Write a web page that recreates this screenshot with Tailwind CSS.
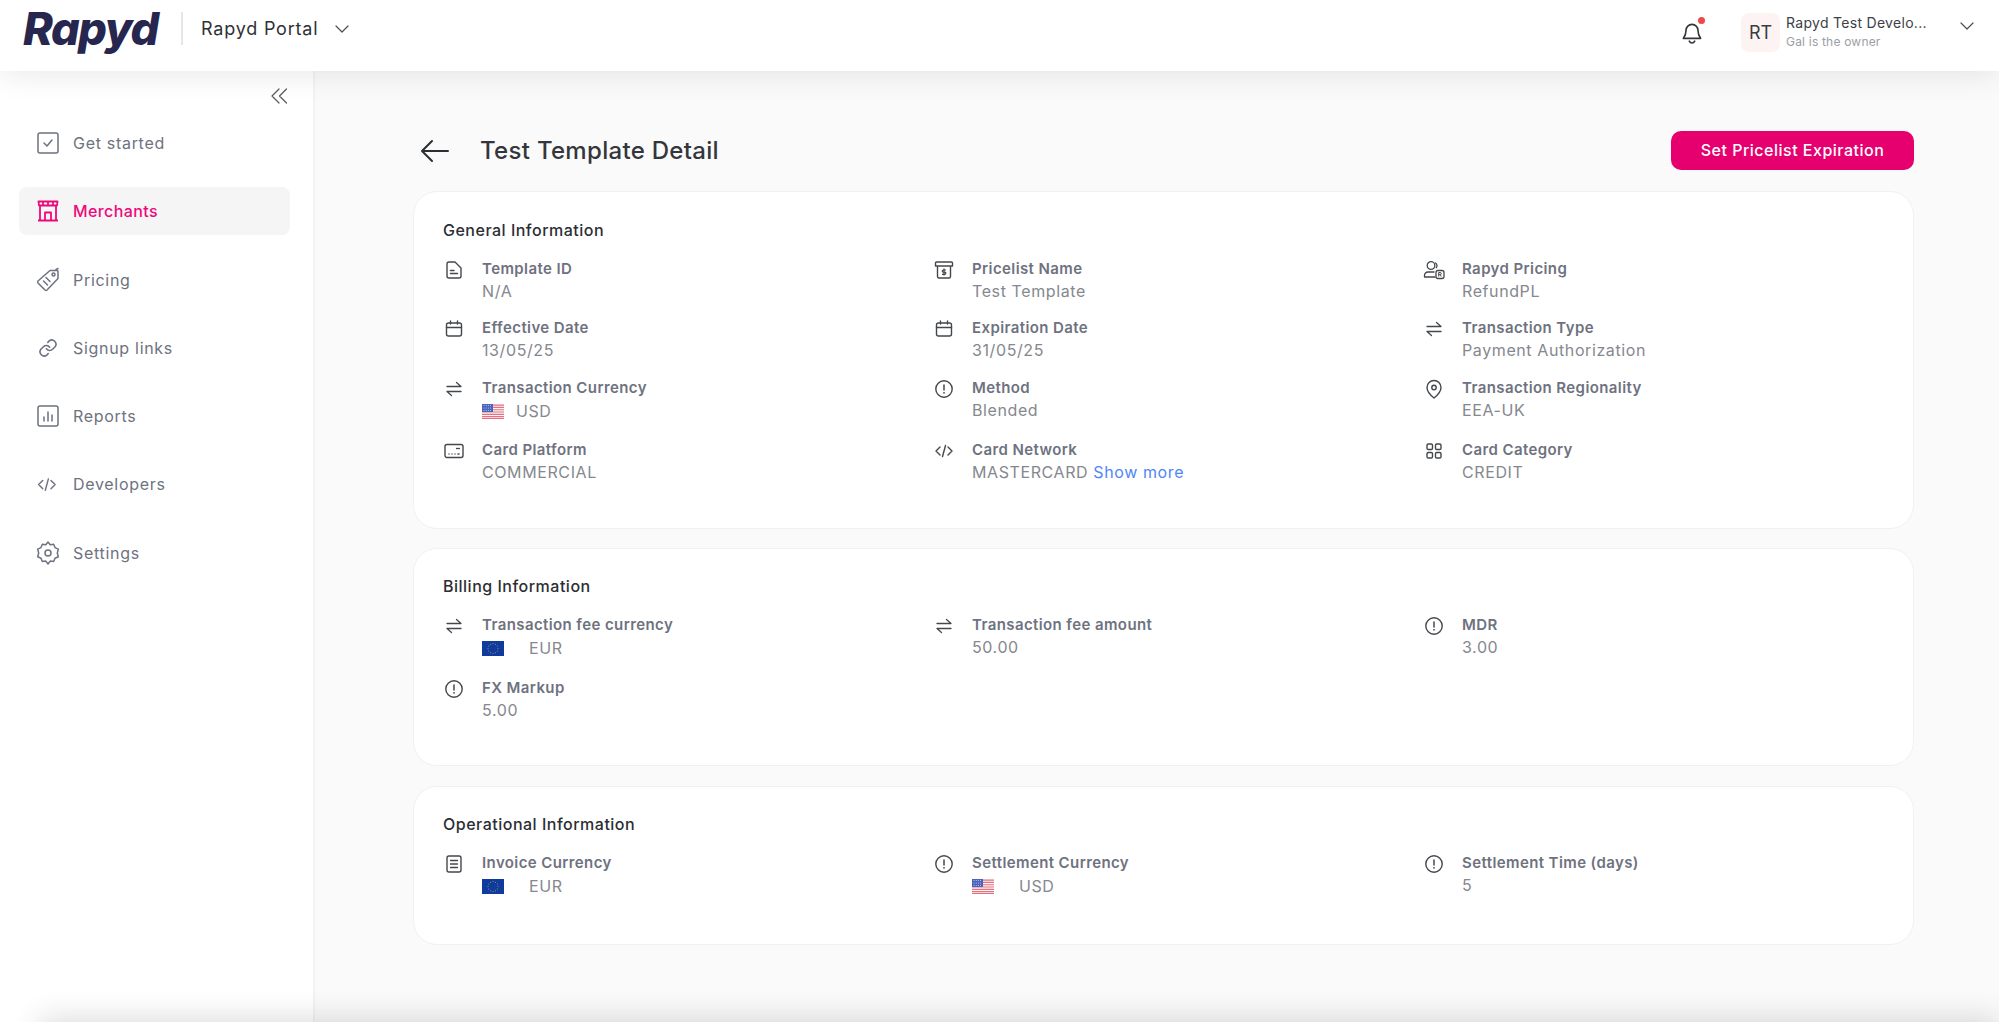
<!DOCTYPE html>
<html lang="en">
<head>
<meta charset="utf-8">
<title>Test Template Detail</title>
<script src="https://cdn.jsdelivr.net/npm/@tailwindcss/browser@4"></script>
</head>
<body class="font-['Inter',sans-serif] bg-[#fafafa] overflow-hidden">
<svg class="hidden" xmlns="http://www.w3.org/2000/svg">
  <symbol id="swap" viewBox="0 0 20 20"><path d="M3 7.500h14L12.500 3.500M17 12.500H3l4.500 4" fill="none" stroke="currentColor" stroke-width="1.300" stroke-linecap="round" stroke-linejoin="round"/></symbol>
  <symbol id="info" viewBox="0 0 20 20"><circle cx="10" cy="10" r="8.200" fill="none" stroke="currentColor" stroke-width="1.400"/><path d="M10 6v5" stroke="currentColor" stroke-width="1.500" stroke-linecap="round"/><circle cx="10" cy="13.800" r=".9" fill="currentColor"/></symbol>
  <symbol id="cal" viewBox="0 0 20 20"><rect x="2.500" y="4" width="15" height="13" rx="2" fill="none" stroke="currentColor" stroke-width="1.400"/><path d="M2.500 8.500h15M6.500 2v3M13.500 2v3" stroke="currentColor" stroke-width="1.400" stroke-linecap="round"/></symbol>
  <symbol id="code" viewBox="0 0 20 20"><path d="M6 6 2 10l4 4M14 6l4 4-4 4M11.500 4.500l-3 11" fill="none" stroke="currentColor" stroke-width="1.400" stroke-linecap="round" stroke-linejoin="round"/></symbol>
  <symbol id="doc" viewBox="0 0 20 20"><path d="M3 4a2 2 0 0 1 2-2h6l6 6v8a2 2 0 0 1-2 2H5a2 2 0 0 1-2-2z" fill="none" stroke="currentColor" stroke-width="1.400" stroke-linejoin="round"/><path d="M6.500 10.500h3.500M6.500 13.500h7" stroke="currentColor" stroke-width="1.400" stroke-linecap="round"/></symbol>
  <symbol id="list" viewBox="0 0 20 20"><rect x="3" y="2" width="14" height="16" rx="2" fill="none" stroke="currentColor" stroke-width="1.400"/><path d="M6.500 6.500h7M6.500 10h7M6.500 13.500h7" stroke="currentColor" stroke-width="1.300" stroke-linecap="round"/></symbol>
  <symbol id="box" viewBox="0 0 20 20"><path d="M1.500 6V3a1 1 0 0 1 1-1h15a1 1 0 0 1 1 1v3zM3.500 6v10.500A1.500 1.500 0 0 0 5 18h10a1.500 1.500 0 0 0 1.500-1.500V6" fill="none" stroke="currentColor" stroke-width="1.400" stroke-linejoin="round"/><path d="M10 8.500v7M12 10H9.300a1.100 1.100 0 0 0 0 2.200h1.400a1.100 1.100 0 0 1 0 2.200H8" fill="none" stroke="currentColor" stroke-width="1.200"/></symbol>
  <symbol id="user" viewBox="0 0 22 20"><circle cx="8" cy="5.500" r="3.800" fill="none" stroke="currentColor" stroke-width="1.300"/><path d="M12.500 3c1.500.8 2 3 .8 4.700M1.500 17v-1.500A3.500 3.500 0 0 1 5 12h6M1.500 17H12" fill="none" stroke="currentColor" stroke-width="1.300" stroke-linecap="round"/><rect x="13" y="10.500" width="8" height="8" rx="2" fill="none" stroke="currentColor" stroke-width="1.300"/><path d="M15.700 16.500v-4h1.500a1.100 1.100 0 0 1 0 2.200h-1.500M17.300 14.700l1 1.800" fill="none" stroke="currentColor" stroke-width="1"/></symbol>
  <symbol id="pin" viewBox="0 0 20 20"><path d="M10 19s-7-5.500-7-10.500a7 7 0 0 1 14 0C17 13.500 10 19 10 19z" fill="none" stroke="currentColor" stroke-width="1.400" stroke-linejoin="round"/><circle cx="10" cy="8.500" r="2.200" fill="none" stroke="currentColor" stroke-width="1.400"/></symbol>
  <symbol id="grid4" viewBox="0 0 20 20"><g fill="none" stroke="currentColor" stroke-width="1.400"><rect x="3" y="3" width="5.500" height="5.500" rx="1.300"/><rect x="11.500" y="3" width="5.500" height="5.500" rx="1.300"/><rect x="3" y="11.500" width="5.500" height="5.500" rx="1.300"/><rect x="11.500" y="11.500" width="5.500" height="5.500" rx="1.300"/></g></symbol>
  <symbol id="card" viewBox="0 0 20 20"><rect x="1" y="3.500" width="18" height="13" rx="2" fill="none" stroke="currentColor" stroke-width="1.400"/><path d="M12 7.500h4" stroke="currentColor" stroke-width="1.300"/><path d="M4.500 13h1M7.500 13h1M10.500 13h1M13.500 13h2" stroke="currentColor" stroke-width="1.300"/></symbol>
  <symbol id="chev" viewBox="0 0 14 8"><path d="M1 1l6 6 6-6" fill="none" stroke="currentColor" stroke-width="1.200" stroke-linecap="round" stroke-linejoin="round"/></symbol>
  <symbol id="us" viewBox="0 0 22 15"><rect width="22" height="15" fill="#f7f7f7"/><path d="M0 1.100h22M0 3.400h22M0 5.700h22M0 8h22M0 10.300h22M0 12.600h22M0 14.500h22" stroke="#e8707f" stroke-width="1.150"/><rect width="11" height="8" fill="#4a63bd"/><g fill="#d6def5"><circle cx="2" cy="1.500" r=".5"/><circle cx="4.200" cy="1.500" r=".5"/><circle cx="6.400" cy="1.500" r=".5"/><circle cx="8.600" cy="1.500" r=".5"/><circle cx="2" cy="4" r=".5"/><circle cx="4.200" cy="4" r=".5"/><circle cx="6.400" cy="4" r=".5"/><circle cx="8.600" cy="4" r=".5"/><circle cx="2" cy="6.500" r=".5"/><circle cx="4.200" cy="6.500" r=".5"/><circle cx="6.400" cy="6.500" r=".5"/><circle cx="8.600" cy="6.500" r=".5"/></g></symbol>
  <symbol id="eu" viewBox="0 0 22 15"><rect width="22" height="15" fill="#0f3a9e"/><g fill="#b9a84a"><circle cx="11" cy="2.500" r=".5"/><circle cx="13.500" cy="3.200" r=".5"/><circle cx="15.300" cy="5" r=".5"/><circle cx="16" cy="7.500" r=".5"/><circle cx="15.300" cy="10" r=".5"/><circle cx="13.500" cy="11.800" r=".5"/><circle cx="11" cy="12.500" r=".5"/><circle cx="8.500" cy="11.800" r=".5"/><circle cx="6.700" cy="10" r=".5"/><circle cx="6" cy="7.500" r=".5"/><circle cx="6.700" cy="5" r=".5"/><circle cx="8.500" cy="3.200" r=".5"/></g></symbol>
</svg>

<div class="relative h-[1022px] w-[1999px] overflow-hidden">
  <header class="relative z-10 flex h-[71px] bg-white pb-[14px] shadow-[0_4px_30px_rgba(0,0,0,0.09)]">
    <div class="flex items-center">
      <span class="ml-[23px] w-[140px] text-[45px] leading-none font-extrabold italic tracking-[-0.03em] text-[#26264f]">Rapyd</span>
      <span class="ml-[18px] h-[33px] w-[2px] bg-[#e6e6e6]"></span>
      <span class="ml-[18px] text-[18px] leading-6 tracking-[0.8px] text-[#2f3237]">Rapyd Portal</span>
      <svg class="ml-[17px] h-[8px] w-[14px] text-[#4a4d52]"><use href="#chev"/></svg>
    </div>
    <div class="ml-auto mt-[8px] flex items-center">
      <div class="relative mr-[36px] h-[26px] w-[26px] text-[#33363b]">
        <svg class="h-[26px] w-[26px]" viewBox="0 0 24 24" fill="none" stroke="currentColor" stroke-width="1.500" stroke-linecap="round" stroke-linejoin="round"><path d="M6.500 9.500a5.500 5.500 0 0 1 11 0c0 4 1 5.500 2.500 7.500H4c1.500-2 2.500-3.500 2.500-7.500zM9.500 19.500c.6 1.200 1.500 1.700 2.500 1.700s1.900-.5 2.500-1.700"/></svg>
        <span class="absolute right-0 top-[-3px] h-[7px] w-[7px] rounded-full bg-[#f04848]"></span>
      </div>
      <div class="flex h-[39px] w-[39px] items-center justify-center rounded-lg bg-[#fdf3f2] text-[18px] text-[#3a3d42]">RT</div>
      <div class="ml-[6px] w-[174px] -translate-y-[1px]">
        <div class="text-[14px] leading-[20px] tracking-[0.3px] text-[#3d4045]">Rapyd Test Develo...</div>
        <div class="text-[12px] leading-[18px] tracking-[0.2px] text-[#9b9ea3]">Gal is the owner</div>
      </div>
      <svg class="mr-[25px] h-[8px] w-[14px] -translate-y-[7px] text-[#4a4d52]"><use href="#chev"/></svg>
    </div>
  </header>

  <div class="flex h-[951px]">
    <aside class="h-full w-[315px] shrink-0 border-r-2 border-[#f2f2f2] bg-white">
      <div class="flex h-[48px] justify-end pr-[25px] pt-[17px]">
        <svg class="h-[16px] w-[17px] text-[#55585e]" viewBox="0 0 17 16" fill="none" stroke="currentColor" stroke-width="1.200" stroke-linecap="round" stroke-linejoin="round"><path d="M8 1 1 8l7 7M15.500 1l-7 7 7 7"/></svg>
      </div>
      <nav class="ml-[19px] flex w-[271px] flex-col gap-[20.300px] text-[16px] tracking-[0.7px] text-[#6e7280]">
        <a class="flex h-[48px] items-center gap-[14px] pl-[18px]">
          <svg class="h-[24px] w-[22px]" viewBox="0 0 22 24" fill="none" stroke="currentColor" stroke-width="1.500" stroke-linecap="round" stroke-linejoin="round"><rect x="1" y="2" width="20" height="20" rx="2"/><path d="M7 12l3 3 5-6"/></svg>
          <span>Get started</span>
        </a>
        <a class="flex h-[48px] items-center gap-[14px] rounded-lg bg-[#f5f5f5] pl-[18px] font-medium tracking-[0.4px] text-[#ec0a7b]">
          <svg class="h-[22px] w-[22px]" viewBox="0 0 22 22" fill="none" stroke="currentColor" stroke-width="1.800" stroke-linejoin="round"><path d="M1.500 1.500h19l-.5 4H2zM3 5.500v15h16v-15M1 20.500h20M8 20.500v-8h6v8M6 1.500v4M11 1.500v4M16 1.500v4"/></svg>
          <span>Merchants</span>
        </a>
        <a class="flex h-[48px] items-center gap-[14px] pl-[18px]">
          <svg class="h-[26px] w-[26px] -ml-[2px] -mr-[2px]" viewBox="0 0 26 26" fill="none" stroke="currentColor" stroke-width="1.500" stroke-linecap="round" stroke-linejoin="round"><path d="M15 3.500h7a1 1 0 0 1 1 1v7L12 23a1.500 1.500 0 0 1-2 0l-7-7a1.500 1.500 0 0 1 0-2z"/><circle cx="18.500" cy="7.500" r="1.500"/><path d="M8.500 14l4 4M11 10.500l4 4M21 2.500l2-1"/></svg>
          <span>Pricing</span>
        </a>
        <a class="flex h-[48px] items-center gap-[14px] pl-[18px]">
          <svg class="h-[22px] w-[22px] p-[1px]" viewBox="0 0 24 24" fill="none" stroke="currentColor" stroke-width="1.900" stroke-linecap="round" stroke-linejoin="round"><path d="M10 13a5 5 0 0 0 7.500.5l3-3a5 5 0 0 0-7-7l-1.700 1.700"/><path d="M14 11a5 5 0 0 0-7.500-.5l-3 3a5 5 0 0 0 7 7l1.700-1.700"/></svg>
          <span>Signup links</span>
        </a>
        <a class="flex h-[48px] items-center gap-[14px] pl-[18px]">
          <svg class="h-[24px] w-[22px]" viewBox="0 0 22 24" fill="none" stroke="currentColor" stroke-width="1.500" stroke-linecap="round"><rect x="1" y="2" width="20" height="20" rx="2"/><path d="M7 17v-4M11 17V8M15 17v-6"/></svg>
          <span>Reports</span>
        </a>
        <a class="flex h-[48px] items-center gap-[14px] pl-[18px]">
          <svg class="h-[24px] w-[22px]" viewBox="1 -.5 18 21"><use href="#code"/></svg>
          <span>Developers</span>
        </a>
        <a class="flex h-[48px] items-center gap-[14px] pl-[18px]">
          <svg class="h-[24px] w-[22px]" viewBox="1 0 22 24" fill="none" stroke="currentColor" stroke-width="1.500" stroke-linejoin="round"><path d="M12 1l2.200 2.800 3.500-.5 1.300 3.300 3.300 1.600-1 3.800 1 3.800-3.300 1.500-1.300 3.300-3.500-.5L12 23l-2.200-2.900-3.500.5L5 17.300l-3.300-1.500 1-3.800-1-3.800L5 6.600l1.300-3.300 3.500.5z"/><circle cx="12" cy="12" r="3"/></svg>
          <span>Settings</span>
        </a>
      </nav>
    </aside>

    <main class="flex-1 bg-[#fafafa] pl-[98px] pr-[85px]">
      <div class="mt-[60px] flex h-[39px] items-center">
        <svg class="ml-[7px] h-[24px] w-[29px] text-[#2b2e33]" viewBox="0 0 29 24" fill="none" stroke="currentColor" stroke-width="2" stroke-linecap="round" stroke-linejoin="round"><path d="M28 12H2M12 2 2 12l10 10"/></svg>
        <h1 class="ml-[31px] text-[24px] leading-8 font-medium tracking-[0.3px] text-[#33363b]">Test Template Detail</h1>
        <button class="ml-auto h-[39px] w-[243px] rounded-[10px] bg-[#e6006f] pb-[1px] text-[16px] font-medium tracking-[0.5px] text-white">Set Pricelist Expiration</button>
      </div>

      <section class="mt-[21px] h-[338px] rounded-[24px] border border-[#f1f1f1] bg-white pl-[28px] pt-[26px]">
        <h2 class="ml-[1px] text-[16px] leading-6 font-medium tracking-[0.5px] text-[#2b2e33]">General Information</h2>
        <div class="mt-[16px] grid grid-cols-[490px_490px_1fr] grid-rows-[59px_60px_62px_44px] text-[16px] leading-[22px] tracking-[0.6px]">
          <div class="flex"><svg class="mr-[16px] h-[24px] w-[24px] p-[2px] text-[#44474c]"><use href="#doc"/></svg><div><div class="text-[15px] font-semibold tracking-[0.4px] text-[#6e7280]">Template ID</div><div class="text-[#85888e]">N/A</div></div></div>
          <div class="flex"><svg class="mr-[16px] h-[24px] w-[24px] p-[2px] text-[#44474c]"><use href="#box"/></svg><div><div class="text-[15px] font-semibold tracking-[0.4px] text-[#6e7280]">Pricelist Name</div><div class="text-[#85888e]">Test Template</div></div></div>
          <div class="flex"><svg class="mr-[16px] h-[24px] w-[24px] p-[1px] text-[#44474c]"><use href="#user"/></svg><div><div class="text-[15px] font-semibold tracking-[0.4px] text-[#6e7280]">Rapyd Pricing</div><div class="text-[#85888e]">RefundPL</div></div></div>

          <div class="flex"><svg class="mr-[16px] h-[24px] w-[24px] p-[2px] text-[#44474c]"><use href="#cal"/></svg><div><div class="text-[15px] font-semibold tracking-[0.4px] text-[#6e7280]">Effective Date</div><div class="text-[#85888e]">13/05/25</div></div></div>
          <div class="flex"><svg class="mr-[16px] h-[24px] w-[24px] p-[2px] text-[#44474c]"><use href="#cal"/></svg><div><div class="text-[15px] font-semibold tracking-[0.4px] text-[#6e7280]">Expiration Date</div><div class="text-[#85888e]">31/05/25</div></div></div>
          <div class="flex"><svg class="mr-[16px] h-[24px] w-[24px] p-[2px] text-[#44474c]"><use href="#swap"/></svg><div><div class="text-[15px] font-semibold tracking-[0.4px] text-[#6e7280]">Transaction Type</div><div class="text-[#85888e]">Payment Authorization</div></div></div>

          <div class="flex"><svg class="mr-[16px] h-[24px] w-[24px] p-[2px] text-[#44474c]"><use href="#swap"/></svg><div><div class="text-[15px] font-semibold tracking-[0.4px] text-[#6e7280]">Transaction Currency</div><div class="mt-[1px] flex items-center text-[#85888e]"><svg class="mr-[12px] h-[15px] w-[22px]"><use href="#us"/></svg>USD</div></div></div>
          <div class="flex"><svg class="mr-[16px] h-[24px] w-[24px] p-[2px] text-[#44474c]"><use href="#info"/></svg><div><div class="text-[15px] font-semibold tracking-[0.4px] text-[#6e7280]">Method</div><div class="text-[#85888e]">Blended</div></div></div>
          <div class="flex"><svg class="mr-[16px] h-[24px] w-[24px] p-[2px] text-[#44474c]"><use href="#pin"/></svg><div><div class="text-[15px] font-semibold tracking-[0.4px] text-[#6e7280]">Transaction Regionality</div><div class="text-[#85888e]">EEA-UK</div></div></div>

          <div class="flex"><svg class="mr-[16px] h-[24px] w-[24px] p-[2px] text-[#44474c]"><use href="#card"/></svg><div><div class="text-[15px] font-semibold tracking-[0.4px] text-[#6e7280]">Card Platform</div><div class="text-[#85888e]">COMMERCIAL</div></div></div>
          <div class="flex"><svg class="mr-[16px] h-[24px] w-[24px] p-[2px] text-[#44474c]"><use href="#code"/></svg><div><div class="text-[15px] font-semibold tracking-[0.4px] text-[#6e7280]">Card Network</div><div class="text-[#85888e]">MASTERCARD <span class="text-[#4f86f7]">Show more</span></div></div></div>
          <div class="flex"><svg class="mr-[16px] h-[24px] w-[24px] p-[2px] text-[#44474c]"><use href="#grid4"/></svg><div><div class="text-[15px] font-semibold tracking-[0.4px] text-[#6e7280]">Card Category</div><div class="text-[#85888e]">CREDIT</div></div></div>
        </div>
      </section>

      <section class="mt-[19px] h-[218px] rounded-[24px] border border-[#f1f1f1] bg-white pl-[28px] pt-[25px]">
        <h2 class="ml-[1px] text-[16px] leading-6 font-medium tracking-[0.5px] text-[#2b2e33]">Billing Information</h2>
        <div class="mt-[16px] grid grid-cols-[490px_490px_1fr] grid-rows-[63px_44px] text-[16px] leading-[22px] tracking-[0.6px]">
          <div class="flex"><svg class="mr-[16px] h-[24px] w-[24px] p-[2px] text-[#44474c]"><use href="#swap"/></svg><div><div class="text-[15px] font-semibold tracking-[0.4px] text-[#6e7280]">Transaction fee currency</div><div class="mt-[1px] flex items-center text-[#85888e]"><svg class="mr-[25px] h-[15px] w-[22px]"><use href="#eu"/></svg>EUR</div></div></div>
          <div class="flex"><svg class="mr-[16px] h-[24px] w-[24px] p-[2px] text-[#44474c]"><use href="#swap"/></svg><div><div class="text-[15px] font-semibold tracking-[0.4px] text-[#6e7280]">Transaction fee amount</div><div class="text-[#85888e]">50.00</div></div></div>
          <div class="flex"><svg class="mr-[16px] h-[24px] w-[24px] p-[2px] text-[#44474c]"><use href="#info"/></svg><div><div class="text-[15px] font-semibold tracking-[0.4px] text-[#6e7280]">MDR</div><div class="text-[#85888e]">3.00</div></div></div>
          <div class="flex"><svg class="mr-[16px] h-[24px] w-[24px] p-[2px] text-[#44474c]"><use href="#info"/></svg><div><div class="text-[15px] font-semibold tracking-[0.4px] text-[#6e7280]">FX Markup</div><div class="text-[#85888e]">5.00</div></div></div>
        </div>
      </section>

      <section class="mt-[20px] h-[159px] rounded-[24px] border border-[#f1f1f1] bg-white pl-[28px] pt-[25px]">
        <h2 class="ml-[1px] text-[16px] leading-6 font-medium tracking-[0.5px] text-[#2b2e33]">Operational Information</h2>
        <div class="mt-[16px] grid grid-cols-[490px_490px_1fr] text-[16px] leading-[22px] tracking-[0.6px]">
          <div class="flex"><svg class="mr-[16px] h-[24px] w-[24px] p-[2px] text-[#44474c]"><use href="#list"/></svg><div><div class="text-[15px] font-semibold tracking-[0.4px] text-[#6e7280]">Invoice Currency</div><div class="mt-[1px] flex items-center text-[#85888e]"><svg class="mr-[25px] h-[15px] w-[22px]"><use href="#eu"/></svg>EUR</div></div></div>
          <div class="flex"><svg class="mr-[16px] h-[24px] w-[24px] p-[2px] text-[#44474c]"><use href="#info"/></svg><div><div class="text-[15px] font-semibold tracking-[0.4px] text-[#6e7280]">Settlement Currency</div><div class="mt-[1px] flex items-center text-[#85888e]"><svg class="mr-[25px] h-[15px] w-[22px]"><use href="#us"/></svg>USD</div></div></div>
          <div class="flex"><svg class="mr-[16px] h-[24px] w-[24px] p-[2px] text-[#44474c]"><use href="#info"/></svg><div><div class="text-[15px] font-semibold tracking-[0.4px] text-[#6e7280]">Settlement Time (days)</div><div class="text-[#85888e]">5</div></div></div>
        </div>
      </section>
    </main>
  </div>

  <div class="absolute left-[40px] right-0 top-[1022px] h-[40px] shadow-[0_-4px_30px_rgba(0,0,0,0.14)]"></div>
</div>
</body>
</html>
